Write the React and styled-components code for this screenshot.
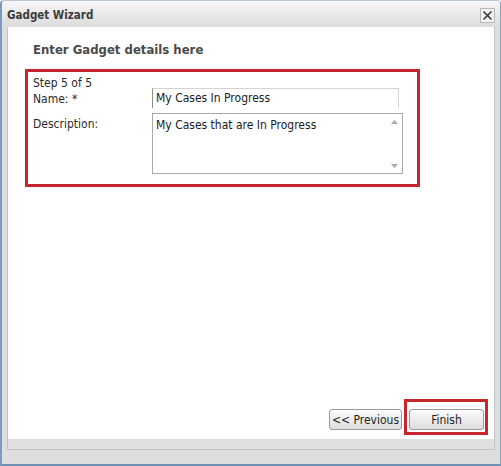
import React from "react";
import styled, { createGlobalStyle } from "styled-components";

const Global = createGlobalStyle`
  html, body { margin: 0; padding: 0; background: #ffffff; }
  body { font-family: "DejaVu Sans Condensed", "DejaVu Sans", sans-serif; }
`;

const Window = styled.div`
  box-sizing: border-box;
  width: 501px;
  height: 466px;
  background: #dedede;
  border: 1px solid #8aa3c0;
  border-top-color: #b8c6d6;
  border-bottom: 2px solid #6f8fb5;
  border-left: 2px solid #7d9bc0;
  border-radius: 4px 4px 0 0;
  display: flex;
  flex-direction: column;
  padding: 0 5px 14px 5px;
`;

const TitleBar = styled.div`
  height: 26px;
  margin: 0 -5px;
  padding: 0 5px 0 5px;
  display: flex;
  align-items: center;
  justify-content: space-between;
  background: linear-gradient(#f7f7f7, #e6e6e6 60%, #dcdcdc);
  border-radius: 3px 3px 0 0;
`;

const Title = styled.div`
  font-weight: bold;
  font-size: 11.5px;
  color: #3c3c3c;
  padding-top: 1px;
`;

const CloseButton = styled.div`
  box-sizing: border-box;
  width: 15px;
  height: 15px;
  border: 1px solid #b8b8b8;
  background: #f3f3f3;
  display: flex;
  align-items: center;
  justify-content: center;
  margin-top: 2px;
`;

const Frame = styled.div`
  flex: 1;
  display: flex;
  flex-direction: column;
  border: 1px solid #c4c4c4;
  border-top: none;
  background: #e0e0e0;
  padding-bottom: 10px;
`;

const Panel = styled.div`
  flex: 1;
  background: #ffffff;
  display: flex;
  flex-direction: column;
  padding: 15px 0 0 17px;
`;

const Heading = styled.div`
  font-weight: bold;
  font-size: 13px;
  color: #4a4a4a;
  margin-left: 8px;
  height: 14px;
  line-height: 14px;
  padding-top: 1px;
`;

const Highlight = styled.div`
  box-sizing: border-box;
  border: 3px solid #c6262e;
`;

const DetailsBox = styled(Highlight)`
  width: 395px;
  height: 118px;
  margin-top: 12px;
  padding: 6px 0 0 5px;
  color: #2a2a2a;
  font-size: 12px;
`;

const Step = styled.div`
  height: 10px;
  line-height: 10px;
`;

const Row = styled.div`
  display: grid;
  grid-template-columns: 119px 1fr;
  align-items: start;
  margin-top: ${(p) => p.$top}px;
`;

const Label = styled.div`
  line-height: 14px;
  padding-top: ${(p) => p.$pad}px;
`;

const TextInput = styled.div`
  box-sizing: border-box;
  width: 247px;
  height: 20px;
  border: 1px solid #d4d4d4;
  border-left-color: #8c8c8c;
  border-bottom: none;
  padding: 2px 0 0 3px;
  font-size: 12px;
  color: #1a1a1a;
`;

const TextArea = styled.div`
  box-sizing: border-box;
  width: 251px;
  height: 61px;
  border: 1px solid #a9a9a9;
  display: flex;
  font-size: 12px;
  color: #1a1a1a;
`;

const AreaText = styled.div`
  flex: 1;
  padding: 4px 0 0 3px;
`;

const ScrollBar = styled.div`
  width: 16px;
  display: flex;
  flex-direction: column;
  justify-content: space-between;
  align-items: center;
  padding: 6px 0 5px;
`;

const Footer = styled.div`
  margin-top: auto;
  display: flex;
  justify-content: flex-end;
  align-items: flex-end;
  gap: 2px;
  padding: 0 6px 4px 0;
`;

const Button = styled.button`
  box-sizing: border-box;
  height: 21px;
  width: ${(p) => p.$w}px;
  margin-bottom: ${(p) => p.$mb || 0}px;
  border: 1px solid #9a9a9a;
  border-radius: 3px;
  background: linear-gradient(#fbfbfb, #ececec 50%, #dedede);
  font-family: "DejaVu Sans Condensed", "DejaVu Sans", sans-serif;
  font-size: 12px;
  color: #1f1f1f;
  padding: 0;
`;

const FinishBox = styled(Highlight)`
  padding: 7px 1px 2px 2px;
`;

export default function App() {
  return (
    <>
      <Global />
      <Window>
        <TitleBar>
          <Title>Gadget Wizard</Title>
          <CloseButton>
            <svg width="11" height="11" viewBox="0 0 11 11">
              <path d="M1.5 1.5 L9.5 9.5 M9.5 1.5 L1.5 9.5" stroke="#333" strokeWidth="1.6" />
            </svg>
          </CloseButton>
        </TitleBar>
        <Frame>
          <Panel>
            <Heading>Enter Gadget details here</Heading>
            <DetailsBox>
              <Step>Step 5 of 5</Step>
              <Row $top={0}>
                <Label $pad={4}>Name: *</Label>
                <TextInput>My Cases In Progress</TextInput>
              </Row>
              <Row $top={5}>
                <Label $pad={4}>Description:</Label>
                <TextArea>
                  <AreaText>My Cases that are In Progress</AreaText>
                  <ScrollBar>
                    <svg width="7" height="4" viewBox="0 0 7 4">
                      <path d="M0 4 L3.5 0 L7 4 Z" fill="#a8a8a8" />
                    </svg>
                    <svg width="7" height="4" viewBox="0 0 7 4">
                      <path d="M0 0 L3.5 4 L7 0 Z" fill="#a8a8a8" />
                    </svg>
                  </ScrollBar>
                </TextArea>
              </Row>
            </DetailsBox>
            <Footer>
              <Button $w={73} $mb={5}>&lt;&lt; Previous</Button>
              <FinishBox>
                <Button $w={75}>Finish</Button>
              </FinishBox>
            </Footer>
          </Panel>
        </Frame>
      </Window>
    </>
  );
}
